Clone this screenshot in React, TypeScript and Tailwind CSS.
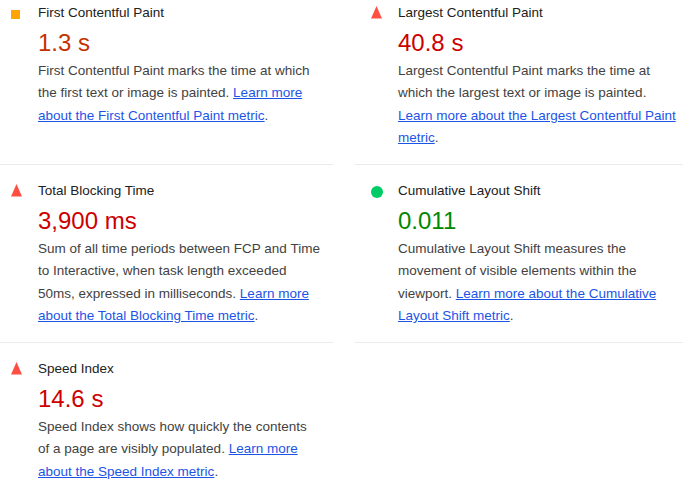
import React from "react";

type Score = "average" | "fail" | "pass";

const metrics: {
  title: string;
  value: string;
  score: Score;
  desc: string;
  link: string;
}[] = [
  {
    title: "First Contentful Paint",
    value: "1.3 s",
    score: "average",
    desc: "First Contentful Paint marks the time at which the first text or image is painted.",
    link: "Learn more about the First Contentful Paint metric",
  },
  {
    title: "Largest Contentful Paint",
    value: "40.8 s",
    score: "fail",
    desc: "Largest Contentful Paint marks the time at which the largest text or image is painted.",
    link: "Learn more about the Largest Contentful Paint metric",
  },
  {
    title: "Total Blocking Time",
    value: "3,900 ms",
    score: "fail",
    desc: "Sum of all time periods between FCP and Time to Interactive, when task length exceeded 50ms, expressed in milliseconds.",
    link: "Learn more about the Total Blocking Time metric",
  },
  {
    title: "Cumulative Layout Shift",
    value: "0.011",
    score: "pass",
    desc: "Cumulative Layout Shift measures the movement of visible elements within the viewport.",
    link: "Learn more about the Cumulative Layout Shift metric",
  },
  {
    title: "Speed Index",
    value: "14.6 s",
    score: "fail",
    desc: "Speed Index shows how quickly the contents of a page are visibly populated.",
    link: "Learn more about the Speed Index metric",
  },
];

function ScoreIcon({ score }: { score: Score }) {
  if (score === "average") {
    return <div className="mt-[7px] h-[9px] w-[9px] bg-[#ffa400]" />;
  }
  if (score === "pass") {
    return <div className="mt-[5px] h-[12px] w-[12px] rounded-full bg-[#00cc66]" />;
  }
  return (
    <svg width="12" height="13" viewBox="0 0 12 13" className="mt-[3.5px]">
      <polygon points="5.5,0 11,12.6 0,12.6" fill="#ff4e42" />
    </svg>
  );
}

const valueColor: Record<Score, string> = {
  average: "text-[#c33300]",
  fail: "text-[#cc0000]",
  pass: "text-[#008800]",
};

function Metric({ m }: { m: (typeof metrics)[number] }) {
  return (
    <div className="flex border-b border-[#ebebeb] pb-[14.5px] pl-[16px] pt-[15.5px]">
      <div className="flex h-[20px] w-[12px] shrink-0 items-start">
        <ScoreIcon score={m.score} />
      </div>
      <div className="ml-[15px] w-[283px]">
        <div className="h-[20px] text-[13.5px] leading-[20px] text-[#212121]">{m.title}</div>
        <div className={`mt-[3px] text-[24px] leading-[34px] ${valueColor[m.score]}`}>{m.value}</div>
        <p className="text-[13.5px] leading-[22.5px] text-[#424242]">
          {m.desc}{" "}
          <a href="#" className="text-[#1c55e6] underline">
            {m.link}
          </a>
          .
        </p>
      </div>
    </div>
  );
}

export default function App() {
  return (
    <div
      className="h-[490px] w-[683px] overflow-hidden bg-white"
      style={{ fontFamily: '"Liberation Sans", Arial, sans-serif' }}
    >
      <div className="-ml-[5px] -mt-[13px] grid grid-cols-[338px_338px] gap-x-[22px]">
        {metrics.map((m) => (
          <Metric key={m.title} m={m} />
        ))}
      </div>
    </div>
  );
}
